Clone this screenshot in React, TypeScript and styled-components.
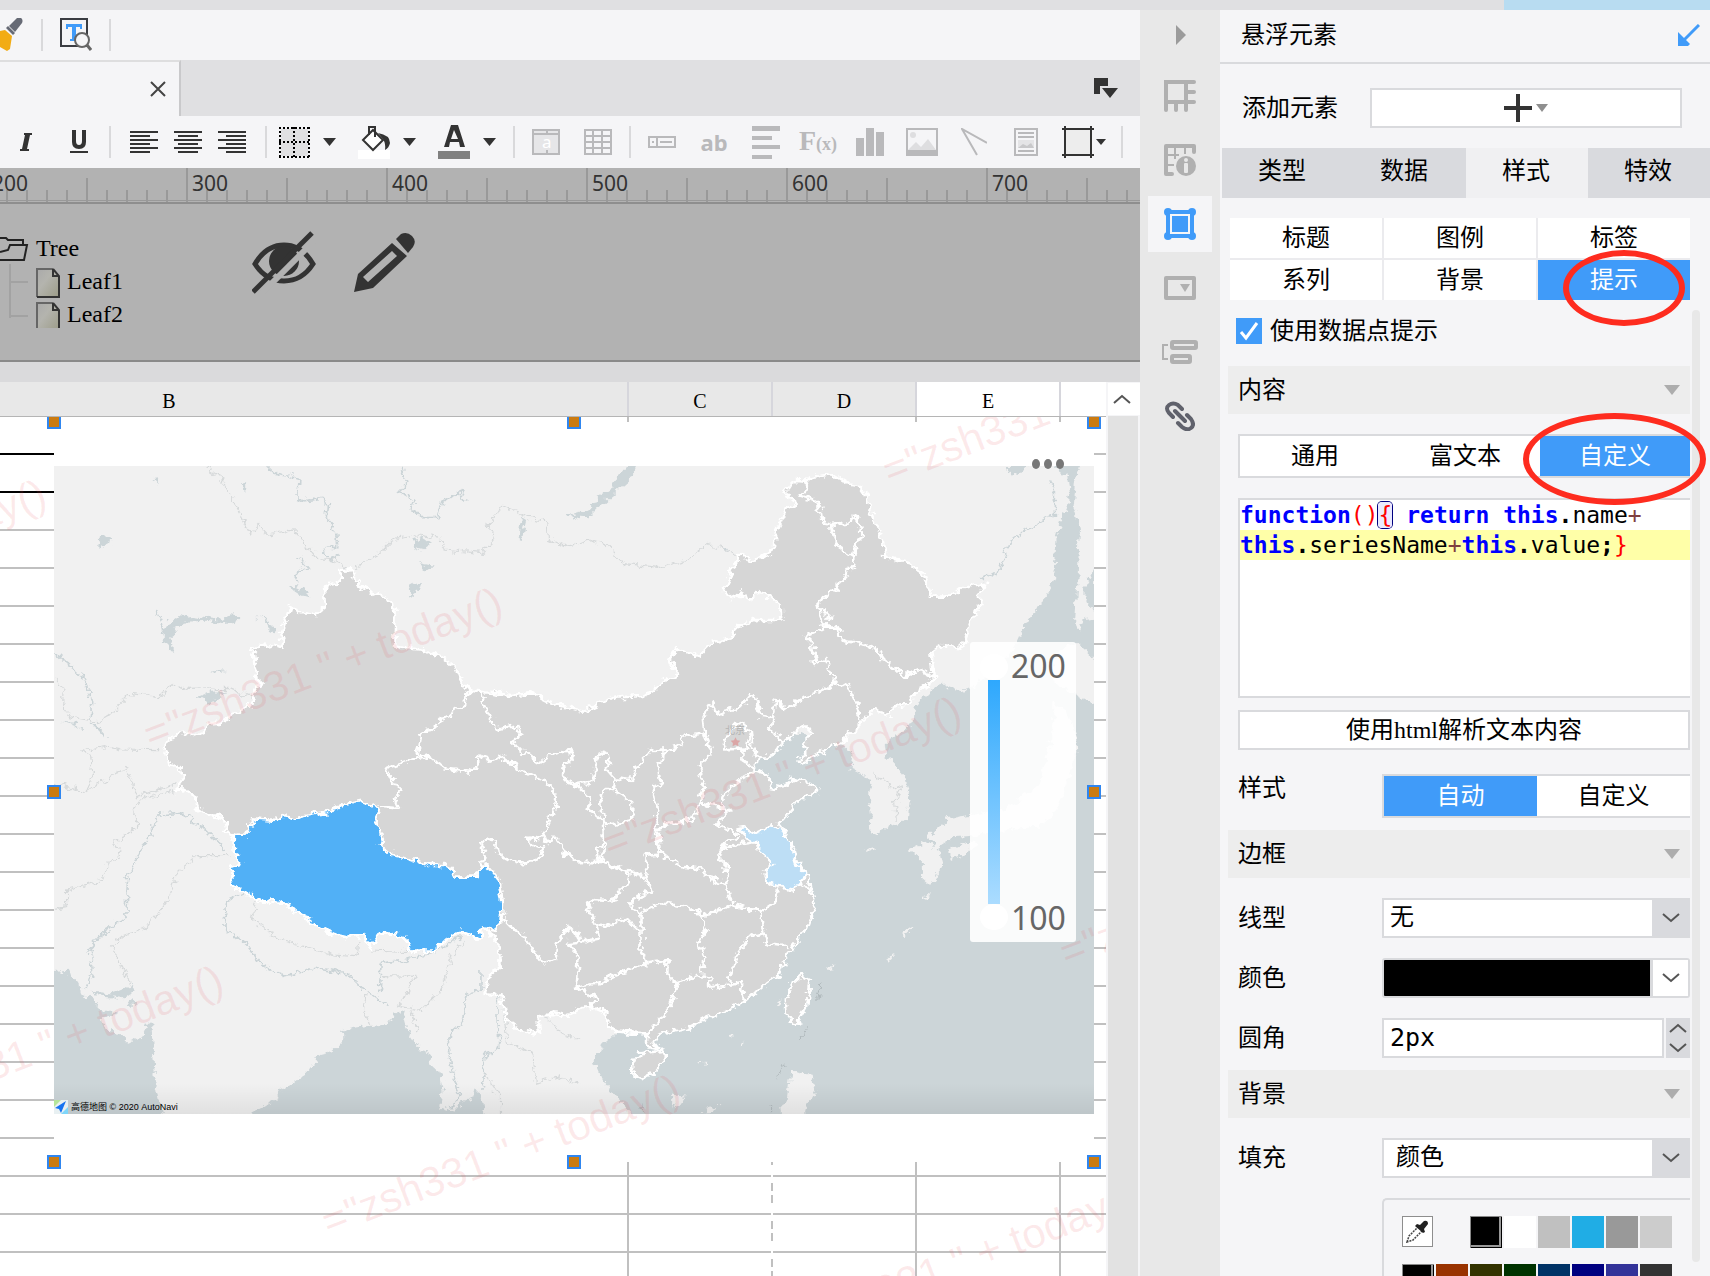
import React from "react";
import styled, { createGlobalStyle, css } from "styled-components";

const ui = `"Liberation Serif", "Noto Sans CJK SC", sans-serif`;
const mono = `"DejaVu Sans Mono", "Noto Sans CJK SC", monospace`;
const blue = "#409bf9";
const line = "#d9dadd";
const panelBg = "#f5f5f7";

const Global = createGlobalStyle`
  * { box-sizing: border-box; }
  body { margin: 0; background: ${panelBg}; font-family: ${ui}; font-size: 24px; line-height: 28px; color: #000; }
  button, input, select { font: inherit; color: inherit; margin: 0; padding: 0; border: 0; border-radius: 0; background: none; }
  svg { display: block; flex: none; }
`;

const Page = styled.div`
  height: 100vh;
  display: flex;
  flex-direction: column;
  overflow: hidden;
`;
const TopStrip = styled.div`
  flex: none;
  height: 10px;
  display: flex;
  justify-content: flex-end;
  background: #e0e0e2;
`;
const TopAccent = styled.div`
  width: 206px;
  background: #b8dcf1;
`;
const Workspace = styled.div`
  flex: 1;
  min-height: 0;
  display: flex;
`;
const Main = styled.main`
  flex: 1;
  min-width: 0;
  display: flex;
  flex-direction: column;
`;

/* ---------- toolbars ---------- */
const Bar = styled.div<{ $h: number; $pad?: number }>`
  flex: none;
  height: ${(p) => p.$h}px;
  padding-left: ${(p) => p.$pad ?? 0}px;
  display: flex;
  align-items: center;
  background: ${panelBg};
`;
const Sep = styled.span<{ $l: number; $r: number }>`
  flex: none;
  width: 2px;
  height: 32px;
  margin: 0 ${(p) => p.$r}px 0 ${(p) => p.$l}px;
  background: #d9d9db;
`;
const Tool = styled.button<{ $w: number; $gap?: number; $off?: boolean }>`
  flex: none;
  width: ${(p) => p.$w}px;
  height: 36px;
  margin-right: ${(p) => p.$gap ?? 0}px;
  display: flex;
  align-items: center;
  justify-content: center;
  color: ${(p) => (p.$off ? "#b9b9bb" : "#333")};
  white-space: nowrap;
`;
const SansGlyph = styled.span`
  font: bold 22px/28px "Noto Sans", sans-serif;
`;
const FxGlyph = styled.span`
  font: bold 28px/28px "Liberation Serif", serif;
  small { font-size: 18px; }
`;
const TabBar = styled.div`
  flex: none;
  height: 56px;
  display: flex;
  align-items: center;
  justify-content: space-between;
  background: #e0e0e2;
`;
const ActiveTab = styled.div`
  width: 181px;
  height: 56px;
  display: flex;
  align-items: center;
  justify-content: flex-end;
  padding-right: 13px;
  background: ${panelBg};
  border-top: 2px solid #dededf;
  border-right: 2px solid #c9c9cb;
`;

/* ---------- ruler and parameter pane ---------- */
const Ruler = styled.div`
  flex: none;
  height: 36px;
  overflow: hidden;
  background:
    linear-gradient(#8e8e8e, #8e8e8e) 0 34px / 100% 2px no-repeat,
    linear-gradient(#999, #999) 0 32px / 100% 1px no-repeat,
    repeating-linear-gradient(90deg, #999 0 2px, transparent 2px 200px) -14px 0 / calc(100% + 14px) 34px no-repeat,
    repeating-linear-gradient(90deg, #999 0 2px, transparent 2px 100px) -14px 10px / calc(100% + 14px) 24px no-repeat,
    repeating-linear-gradient(90deg, #999 0 2px, transparent 2px 20px) -14px 22px / calc(100% + 14px) 12px no-repeat,
    #b2b2b2;
`;
const RulerLabels = styled.div`
  display: flex;
  margin-left: -14px;
  font: 21px/30px "Noto Sans", sans-serif;
  color: #333;
  span { flex: none; width: 200px; padding-left: 6px; }
`;
const ParamPane = styled.div`
  flex: none;
  height: 158px;
  display: flex;
  align-items: flex-start;
  padding-top: 24px;
  background: #b2b2b2;
  border-bottom: 2px solid #8a8a8a;
`;
const TreeBox = styled.div`
  width: 252px;
  height: 100px;
  display: flex;
  gap: 7px;
  overflow: hidden;
`;
const TreeLabels = styled.ul`
  margin: 0 0 0 -31px;
  padding: 6px 0 0;
  list-style: none;
`;
const TreeLabel = styled.li<{ $deep?: boolean }>`
  height: 33px;
  padding-left: ${(p) => (p.$deep ? 31 : 0)}px;
`;
const PaneIcons = styled.div`
  display: flex;
  gap: 38px;
`;
const Gap = styled.div`
  flex: none;
  height: 20px;
  background: #dadadc;
`;

/* ---------- sheet ---------- */
const SheetWrap = styled.div`
  flex: 1;
  min-height: 0;
  display: flex;
`;
const SheetColumn = styled.div`
  flex: 1;
  min-width: 0;
  display: flex;
  flex-direction: column;
`;
const ColHeads = styled.div`
  flex: none;
  height: 35px;
  display: flex;
  border-bottom: 1px solid #b5b5b5;
  background: #fff;
`;
const ColHead = styled.div<{ $w?: number; $pad?: number; $on?: boolean }>`
  ${(p) => (p.$w ? css`flex: none; width: ${p.$w}px;` : css`flex: 1;`)}
  padding: 3px ${(p) => p.$pad ?? 0}px 0 0;
  display: flex;
  align-items: center;
  justify-content: center;
  font-size: 20px;
  background: ${(p) => (p.$on ? "#fff" : "#e8e8e8")};
  border-right: ${(p) => (p.$w ? "2px solid #d6d6dc" : "0")};
`;
const Sheet = styled.div`
  position: relative;
  flex: 1;
  overflow: hidden;
  background:
    linear-gradient(#000, #000) 0 36px / 54px 2px no-repeat,
    linear-gradient(#000, #000) 0 74px / 54px 2px no-repeat,
    repeating-linear-gradient(#fff 0 6px, #c0c0c0 6px 14px, #fff 14px 18px, #c0c0c0 18px 26px, #fff 26px 38px) 771px 0 / 2px 100% no-repeat,
    linear-gradient(#c0c0c0, #c0c0c0) 627px 0 / 2px 100% no-repeat,
    linear-gradient(#c0c0c0, #c0c0c0) 915px 0 / 2px 100% no-repeat,
    linear-gradient(#c0c0c0, #c0c0c0) 1059px 0 / 2px 100% no-repeat,
    repeating-linear-gradient(#fff 0 36px, #c0c0c0 36px 38px);
`;
const FloatBox = styled.section`
  position: absolute;
  left: 54px;
  top: 5px;
  width: 1040px;
  height: 740px;
  padding: 44px 0 48px;
  background: #fff;
`;
const HandleLayer = styled.div`
  position: absolute;
  left: 54px;
  top: 5px;
  width: 1040px;
  height: 740px;
  pointer-events: none;
`;
const Handle = styled.i<{ $x: number; $y: number }>`
  position: absolute;
  left: calc(${(p) => p.$x}% - 7px);
  top: calc(${(p) => p.$y}% - 7px);
  width: 14px;
  height: 14px;
  background: #cb7b10;
  border: 2px solid #2f86f0;
`;
const MapFrame = styled.div`
  position: relative;
  height: 648px;
`;
const CityLabel = styled.span`
  position: absolute;
  left: 671px;
  top: 257px;
  font: 10px/14px "Noto Sans CJK SC", sans-serif;
  color: #b4b4b4;
`;
const MoreButton = styled.button`
  position: absolute;
  right: 30px;
  top: -7px;
  display: flex;
  gap: 4px;
  i { width: 8px; height: 10px; border-radius: 50%; background: #777; }
`;
const Legend = styled.div`
  position: absolute;
  right: 18px;
  top: 176px;
  width: 106px;
  height: 300px;
  padding: 12px 10px;
  display: flex;
  gap: 3px;
  background: rgba(255, 255, 255, 0.9);
  border-radius: 3px;
`;
const LegendTrack = styled.div`
  width: 28px;
  display: flex;
  flex-direction: column;
  align-items: center;
  i { width: 28px; height: 26px; border-radius: 50%; background: #fff; }
  b { flex: 1; width: 12px; background: linear-gradient(#2ea8fd, #abdcff); }
`;
const LegendLabels = styled.div`
  display: flex;
  flex-direction: column;
  justify-content: space-between;
  font: 32px/24px "Noto Sans", sans-serif;
  color: #666;
`;
const MapCredit = styled.div`
  position: absolute;
  left: 0;
  bottom: 0;
  display: flex;
  align-items: center;
  gap: 3px;
  font: 9px/14px "Liberation Sans", "Noto Sans CJK SC", sans-serif;
`;
const Watermark = styled.span<{ $x: number; $y: number }>`
  position: absolute;
  left: ${(p) => p.$x}px;
  top: ${(p) => p.$y}px;
  font: 42px/42px "Liberation Sans", Arial, sans-serif;
  color: rgba(232, 80, 90, 0.12);
  white-space: pre;
  transform: rotate(-21deg);
  transform-origin: 0 100%;
  pointer-events: none;
`;
const VScroll = styled.div`
  flex: none;
  width: 34px;
  display: flex;
  flex-direction: column;
  background: ${panelBg};
  padding: 0 2px;
`;
const VScrollUp = styled.button`
  height: 32px;
  margin: 1px -2px 1px 0;
  padding-right: 4px;
  display: flex;
  align-items: center;
  justify-content: center;
  background: #fff;
`;
const VScrollThumb = styled.div`
  flex: 1;
  background: #e2e2e2;
`;

/* ---------- rail ---------- */
const Rail = styled.nav`
  flex: none;
  width: 80px;
  padding: 0 8px;
  display: flex;
  flex-direction: column;
  gap: 8px;
  background: #e8e8e8;
`;
const RailButton = styled.button<{ $on?: boolean }>`
  height: 56px;
  display: flex;
  align-items: center;
  justify-content: center;
  background: ${(p) => (p.$on ? panelBg : "none")};
  color: #b0b0b0;
`;
const RailToggle = styled(RailButton)`
  height: 50px;
  padding-left: 2px;
`;

/* ---------- property panel ---------- */
const Panel = styled.aside`
  flex: none;
  width: 490px;
  display: flex;
  flex-direction: column;
  background: ${panelBg};
`;
const PanelHead = styled.header`
  flex: none;
  height: 54px;
  padding: 0 10px 2px 21px;
  display: flex;
  align-items: center;
  justify-content: space-between;
  border-bottom: 2px solid ${line};
  h2 { margin: 0; font-size: 24px; font-weight: normal; }
`;
const AddRow = styled.div`
  flex: none;
  height: 84px;
  padding: 4px 28px 0 22px;
  display: grid;
  grid-template-columns: 128px 1fr;
  align-items: center;
`;
const AddButton = styled.button`
  height: 40px;
  display: flex;
  align-items: center;
  justify-content: center;
  gap: 4px;
  background: #fff;
  border: 2px solid ${line};
`;
const Tabs = styled.div`
  flex: none;
  height: 50px;
  margin-left: 2px;
  display: grid;
  grid-template-columns: repeat(4, 1fr);
`;
const Tab = styled.button<{ $on?: boolean }>`
  background: ${(p) => (p.$on ? "#f0f0f2" : "#d9dade")};
  padding: 0 2px 4px 0;
`;
const SubTabs = styled.div`
  flex: none;
  margin: 20px 20px 0 10px;
  display: grid;
  grid-template-columns: repeat(3, 1fr);
  gap: 2px;
  background: #ebebee;
`;
const SubTab = styled.button<{ $on?: boolean }>`
  position: relative;
  height: 40px;
  background: ${(p) => (p.$on ? blue : "#fff")};
  color: ${(p) => (p.$on ? "#fff" : "#000")};
`;
const RedRing = styled.i<{ $x: number; $y: number; $w: number; $h: number }>`
  position: absolute;
  z-index: 2;
  left: ${(p) => p.$x}px;
  top: ${(p) => p.$y}px;
  width: ${(p) => p.$w}px;
  height: ${(p) => p.$h}px;
  border: 6px solid #fe2c1f;
  border-radius: 50%;
`;
const PanelBody = styled.div`
  flex: 1;
  min-height: 0;
  display: flex;
  gap: 2px;
  padding-right: 10px;
`;
const PanelScroll = styled.div`
  flex: 1;
  min-width: 0;
  padding-left: 8px;
`;
const ScrollThumb = styled.div`
  width: 8px;
  margin: 10px 0 14px;
  border-radius: 4px;
  background: #e8e8e8;
`;
const CheckRow = styled.label`
  height: 66px;
  padding: 0 8px 4px;
  display: flex;
  align-items: center;
  gap: 8px;
`;
const CheckBox = styled.input`
  appearance: none;
  width: 26px;
  height: 26px;
  background: ${blue} center / 26px no-repeat
    url("data:image/svg+xml,%3Csvg xmlns='http://www.w3.org/2000/svg' viewBox='0 0 26 26'%3E%3Cpath d='M5 14l5 6L21 5' fill='none' stroke='white' stroke-width='3'/%3E%3C/svg%3E");
`;
const SectionHead = styled.button`
  width: 100%;
  height: 48px;
  padding: 0 10px;
  display: flex;
  align-items: center;
  justify-content: space-between;
  background: #ededed;
`;
const Fields = styled.div`
  padding: 20px 0 12px 10px;
  display: flex;
  flex-direction: column;
  gap: 20px;
`;
const ContentFields = styled.div`
  padding: 20px 0 12px 10px;
  display: flex;
  flex-direction: column;
`;
const Segments = styled.div`
  height: 44px;
  display: flex;
  border: 2px solid ${line};
  border-right: 0;
  background: #fff;
`;
const Segment = styled.button<{ $on?: boolean }>`
  position: relative;
  flex: 1;
  background: ${(p) => (p.$on ? blue : "#fff")};
  color: ${(p) => (p.$on ? "#fff" : "#000")};
`;
const Code = styled.div`
  height: 200px;
  margin: 20px 0 12px;
  border: 2px solid ${line};
  border-right: 0;
  background: #fff;
  font: 23px/30px ${mono};
  white-space: pre;
  outline: none;
`;
const CodeLine = styled.div<{ $on?: boolean }>`
  height: 30px;
  background: ${(p) => (p.$on ? "#ffffa8" : "none")};
`;
const Kw = styled.b`
  color: #0000ff;
`;
const Br = styled.span<{ $match?: boolean }>`
  color: #ff0000;
  ${(p) =>
    p.$match &&
    css`
      border-radius: 4px;
      background: #eaeaff;
      box-shadow: 0 0 0 1px #000080;
    `}
`;
const Op = styled.span`
  color: #804040;
`;
const WideButton = styled.button`
  height: 40px;
  margin-bottom: 24px;
  background: #fff;
  border: 2px solid ${line};
`;
const Field = styled.div<{ $top?: boolean }>`
  display: grid;
  grid-template-columns: 144px 1fr;
  align-items: ${(p) => (p.$top ? "start" : "center")};
`;
const SelectFrame = styled.div`
  height: 40px;
  display: grid;
  grid-template-columns: 1fr 38px;
  background: #fff;
  border: 2px solid ${line};
  border-right: 0;
`;
const Select = styled.select<{ $pad: number }>`
  grid-area: 1 / 1 / 2 / 3;
  appearance: none;
  width: 100%;
  height: 36px;
  padding: 0 44px 2px ${(p) => p.$pad}px;
  outline: none;
`;
const SelectArrow = styled.span<{ $plain?: boolean }>`
  grid-area: 1 / 2 / 2 / 3;
  display: flex;
  align-items: center;
  justify-content: center;
  background: ${(p) => (p.$plain ? "#fff" : "#d9dade")};
  border-left: ${(p) => (p.$plain ? `3px solid ${line}` : "0")};
  pointer-events: none;
`;
const ColorButton = styled.button`
  width: 100%;
  height: 40px;
  display: grid;
  grid-template-columns: 1fr 38px;
  background: #000;
  border: 2px solid ${line};
  border-radius: 3px;
`;
const Stepper = styled.div`
  height: 40px;
  display: grid;
  grid-template-columns: 1fr 24px;
  gap: 2px;
`;
const StepInput = styled.input`
  width: 100%;
  min-width: 0;
  padding: 0 6px;
  background: #fff;
  border: 2px solid ${line};
  font: 25px/36px ${mono};
`;
const StepButtons = styled.div`
  display: flex;
  flex-direction: column;
  background: #d9dade;
  button { flex: 1; display: flex; align-items: center; justify-content: center; }
`;
const Palette = styled.div`
  margin-left: 144px;
  height: 120px;
  padding: 16px 18px;
  display: flex;
  flex-direction: column;
  gap: 16px;
  border: 2px solid ${line};
  border-right: 0;
  border-radius: 5px 0 0 0;
`;
const SwatchRow = styled.div`
  height: 32px;
  display: flex;
  gap: 2px;
`;
const PickButton = styled.button`
  width: 31px;
  height: 31px;
  margin-right: 35px;
  display: flex;
  align-items: center;
  justify-content: center;
  background: #fff;
  border: 1px solid #8e8e8e;
`;
const Swatch = styled.button<{ $c: string; $on?: boolean }>`
  width: 32px;
  height: 32px;
  background: ${(p) => p.$c};
  ${(p) => p.$on && css`box-shadow: inset 1px 1px #888, inset -1px -1px #000, inset -3px -3px #999;`}
`;

/* ---------- small drawings ---------- */
const Caret = ({ w = 13, h = 8, c = "#333" }: { w?: number; h?: number; c?: string }) => (
  <svg width={w} height={h} viewBox="0 0 13 8" preserveAspectRatio="none"><path d="M0 0h13L6.5 8z" fill={c} /></svg>
);
const Chevron = ({ up }: { up?: boolean }) => (
  <svg width="18" height="10" viewBox="0 0 18 10">
    <path d={up ? "M1 9l8-7 8 7" : "M1 1l8 7 8-7"} fill="none" stroke="#555" strokeWidth="2" />
  </svg>
);
const Lines = ({ rows }: { rows: number[][] }) => (
  <svg width="28" height="24" viewBox="0 0 28 24" fill="currentColor">
    {rows.map(([x, w], i) => <rect key={i} x={x} y={1 + i * 4} width={w} height="2" />)}
  </svg>
);
const Leaf = ({ y }: { y: number }) => (
  <g transform={`translate(36 ${y})`}>
    <path d="M1 1h16l6 7v21H1z" fill="url(#leafFill)" />
    <path d="M1 29V1h16" fill="none" stroke="#666" strokeWidth="2" />
    <path d="M17 1v7h6M17 1l6 7v21H1" fill="none" stroke="#333" strokeWidth="2" />
  </g>
);

const lakes = [
  "M440 640 455 610 485 585 500 592 520 588 600 600 625 585 645 592 640 605 600 610 560 602 500 605 475 620 462 660 468 692 458 690 440 660z",
  "M695 592 730 600 748 640 735 638 722 608z",
  "M535 830 570 815 608 814 590 840 560 845z",
  "M568 750 608 752 590 760z",
  "M1115 360 1140 350 1165 372 1140 392 1118 382z",
  "M1408 290 1422 300 1410 358 1402 355z",
  "M1105 520 1115 495 1135 492 1130 512 1110 527z",
  "M265 370 275 352 300 348 295 370 275 380z",
  "M782 500 800 498 830 515 838 532 815 525z",
  "M1135 432 1170 440 1155 452z",
  "M652 190 665 190 666 218 655 210z",
  "M415 178 435 175 428 195z",
  "M168 905 200 908 225 930 200 918z",
  "M1694 138 1719 138 1704 175 1664 215 1619 260 1589 295 1534 290 1564 282 1594 265 1614 235 1654 205 1674 165z",
  "M1950 385 1970 380 1968 395z",
  "M1530 287 1568 275 1568 300z",
];
const rivers = [
  "M720 140 740 160 780 165 808 175 805 235 820 243 870 235 885 250 882 290 910 340 913 380 885 378 870 400 900 420 915 405",
  "M1085 140 1100 190 1080 215 1120 240 1110 265 1130 290 1185 290 1200 240 1245 218 1260 245",
  "M810 410 832 440 805 455 800 490",
  "M146 695 180 730 215 760 240 810 248 850 243 900 285 950",
  "M420 570 435 600 440 640",
  "M400 1260 375 1300 345 1370 340 1490 270 1550 240 1590 252 1645 230 1710",
  "M400 1255 430 1185 490 1180 545 1220 610 1290",
  "M660 1420 610 1445 605 1520 660 1570 710 1635 770 1668 850 1645 940 1662 975 1700 1050 1760",
  "M1245 1550 1190 1590 1100 1620 1030 1630 1025 1720",
  "M1300 1650 1300 1710 1260 1720 1250 1810 1210 1850 1222 1950 1240 2020 1220 2065",
  "M1345 1720 1348 1885 1310 1905 1310 1960 1305 2010",
  "M2655 480 2700 450 2730 360 2820 300 2850 285 2850 190 2835 180",
];
const borders = [
  "M555 140 600 180 640 260 675 340 700 310 720 342 790 330 830 375 860 415 900 420 940 445",
  "M960 440 1020 405 1060 360 1130 345 1190 355 1200 390 1300 400 1335 365 1320 320 1355 255 1420 290 1475 305 1480 355 1525 380 1600 362 1640 375 1685 430 1780 442 1860 420 1915 373 2000 405",
  "M146 775 170 805 170 858 190 890 260 905 300 880 350 820 435 830 465 790 510 808 620 805 685 835",
  "M285 980 330 990 430 992 M285 980 225 990 245 1010 250 1060 235 1115 340 1040 370 1130 480 1090",
  "M235 1115 146 1090 M475 1110 380 1140 360 1170 370 1220 310 1270 325 1310 290 1330 280 1380 180 1410 180 1460 146 1468",
  "M620 1310 530 1310 480 1360 455 1440 400 1520 330 1548 300 1580 355 1700",
  "M695 1440 680 1500 760 1560 900 1605 965 1610 970 1560 M1000 1590 1110 1595",
  "M1120 1560 1245 1550 M1035 1670 1120 1672 1080 1760 1140 1770 1190 1715 1220 1610 1250 1560",
  "M990 1710 985 1770 1000 1815 M1110 1770 1130 1840",
  "M1355 1720 1370 1860 1400 1880 1440 1900 1450 1990 1510 1970 1568 1990",
  "M1480 1795 1520 1840 1568 1860 M1310 1960 1350 2030 1350 2082",
  "M2360 1060 2420 1110 2440 1100 2420 1140 2425 1200",
];
const china =
  "M445 1000 455 960 485 940 510 935 525 948 550 940 560 910 600 908 640 880 685 850 690 815 700 795 690 740 687 700 672 690 740 672 767 683 760 640 783 562 810 575 855 582 878 560 876 500 918 485 920 450 955 447 962 485 1000 515 1045 530 1070 580 1065 680 1130 688 1190 705 1230 740 1245 780 1270 812 1380 825 1440 820 1480 845 1540 865 1574 875 1630 845 1670 832 1740 828 1775 805 1790 785 1830 765 1812 720 1825 685 1890 707 1925 668 1975 655 1990 620 2040 600 2115 600 2112 560 2070 520 2045 515 2025 537 2005 520 1975 535 1957 510 2000 405 2040 425 2095 385 2095 340 2125 270 2148 260 2145 235 2120 220 2150 180 2175 182 2190 172 2250 163 2290 190 2320 195 2345 235 2360 300 2390 370 2393 410 2460 430 2500 465 2518 530 2570 530 2600 505 2665 488 2648 515 2650 550 2625 600 2600 685 2545 675 2517 695 2525 780 2475 820 2450 855 2410 860 2410 885 2360 870 2325 915 2275 965 2214 1000 2169 1030 2164 1020 2182 990 2169 970 2194 940 2189 920 2164 920 2144 940 2139 955 2114 965 2084 1010 2049 1010 2039 1050 2079 1065 2084 1100 2109 1105 2149 1075 2204 1095 2214 1110 2174 1130 2144 1160 2104 1215 2124 1245 2144 1290 2154 1330 2189 1370 2194 1420 2204 1450 2179 1530 2139 1580 2109 1660 2059 1700 2014 1745 1954 1775 1909 1795 1859 1825 1784 1840 1769 1870 1779 1885 1749 1885 1749 1840 1669 1835 1639 1810 1639 1780 1589 1755 1539 1785 1500 1780 1455 1790 1460 1840 1405 1830 1368 1800 1355 1720 1310 1725 1320 1670 1350 1640 1350 1570 1330 1545 1308 1525 1295 1555 1245 1532 1205 1560 1170 1595 1113 1595 1095 1550 1030 1535 1000 1580 990 1545 940 1553 890 1540 860 1520 820 1490 790 1465 735 1435 718 1447 660 1415 635 1400 625 1340 650 1335 632 1290 632 1245 612 1235 605 1190 560 1185 535 1165 530 1130 495 1108 475 1110 495 1090 488 1045 455 1032z";
const tibet =
  "M632 1245 665 1243 685 1195 750 1200 770 1185 790 1198 860 1180 895 1175 905 1160 975 1145 1015 1160 1025 1175 1015 1200 1028 1225 1035 1260 1030 1280 1060 1305 1110 1315 1160 1335 1210 1335 1235 1370 1285 1370 1300 1340 1320 1340 1350 1380 1360 1450 1355 1500 1340 1530 1308 1525 1295 1555 1245 1532 1205 1560 1170 1595 1113 1595 1095 1550 1030 1535 1000 1580 990 1545 940 1553 890 1540 860 1520 820 1490 790 1465 735 1435 718 1447 660 1415 635 1400 625 1340 650 1335 632 1290z";
const westProvinces = [
  "M1270 812 1255 825 1258 855 1225 880 1190 900 1170 930 1140 935 1130 1000 1122 1015 1045 1045 1060 1080 1082 1110 1065 1130 1078 1165 1025 1160",
  "M1122 1015 1160 1008 1200 1045 1270 1055 1290 1040 1290 1005 1330 1022 1355 1010 1400 1045 1440 1065 1490 1100 1505 1155 1485 1200 1470 1240 1480 1270 1500 1250 1530 1290 1568 1330",
  "M1300 815 1318 880 1340 930 1400 915 1405 940 1385 970 1430 1010 1460 1030 1490 1005 1540 990 1548 1020 1520 1045 1525 1075 1560 1100",
  "M1425 1250 1470 1255 M1425 1250 1440 1275 1470 1290 1450 1320 1420 1335 1375 1318 1345 1300 1340 1262 1315 1255 1300 1275 1310 1290 1302 1340",
  "M1355 1490 1380 1520 1410 1540 1465 1630 1500 1620 1510 1560 1545 1520 1570 1560",
];
const northProvinces = [
  "M5 990 30 995 30 1020 8 1050 15 1080 45 1095 90 1085 92 1040 105 1005 125 995 130 1050 150 1075 190 1080 215 1030 245 990 290 988",
  "M45 1095 80 1130 75 1165 115 1200 120 1290 110 1325",
  "M150 1075 145 1110 195 1150 195 1200 130 1215 115 1200 110 1130 120 1110 145 1110",
  "M290 988 265 1040 270 1085 255 1110 265 1170 255 1230 270 1300",
  "M290 988 320 980 330 950 390 940 410 1000 375 1040 390 1090 375 1160 360 1200 310 1205 258 1232",
  "M390 940 385 890 410 850 425 880 490 860 515 825 530 835 545 890 575 895 585 840 610 870 660 830 735 800 745 785 780 800 800 850 815 915",
  "M575 895 565 920 600 965",
  "M450 945 480 910 515 930 505 985 450 988 440 970z",
  "M515 930 520 990 535 1010M490 988 490 1020 525 1045",
  "M525 1055 490 1075 450 1110 435 1160 460 1170 420 1215 480 1240M375 1150 435 1160",
  "M745 785 735 770 720 720 690 735 680 670 660 650 690 635 715 620 750 620 760 660 850 680 870 720 900 740 930 770 970 750 1015 778",
  "M715 620 700 580 695 550 765 485 780 445 795 440 795 410 750 380 740 350 732 315 710 310 700 250 680 240 650 230 668 200 660 180",
  "M732 315 780 310 795 290 820 325 800 370 795 410",
  "M700 570 735 590 720 600",
  "M440 1295 455 1260 480 1250",
];
const southProvinces = [
  "M0 40 35 45 45 70 110 65 185 95 180 130 140 185 90 180 75 210 95 250 130 260 180 235 215 275",
  "M185 90 230 115 250 155 195 175 190 205 220 215",
  "M230 115 240 70 225 45 275 40 320 80 380 85 400 115 450 130 465 195 440 210 380 225 345 200 270 190 220 215 220 330 235 370",
  "M380 225 395 260 375 305 390 350 385 400",
  "M0 300 20 260 45 270 55 305 105 295 95 250M20 310 50 350 45 440 105 430 150 405 235 370M20 310 55 305",
  "M45 440 105 480 75 500M235 370 290 360 290 400 315 430 300 500 260 550 235 580",
  "M315 430 370 405 415 410 400 440 490 430 500 485",
  "M465 195 540 215 550 280 510 290 480 340 455 430",
  "M455 130 450 80 425 55 440 20 530 5",
  "M540 215 580 185 590 145M550 280 560 310 615 315M650 125 680 160",
  "M270 40 265 -25M110 65 95 40 120 0",
];
const ns = { vectorEffect: "non-scaling-stroke" as const };

function ChinaMap() {
  return (
    <svg width="100%" height="100%" viewBox="146 138 2811 1944" preserveAspectRatio="none" role="img" aria-label="map">
      <defs>
        <filter id="coast" x="0" y="0" width="100%" height="100%">
          <feTurbulence type="fractalNoise" baseFrequency="0.05" numOctaves="3" seed="4" />
          <feDisplacementMap in="SourceGraphic" scale="30" xChannelSelector="R" yChannelSelector="G" />
        </filter>
        <linearGradient id="fade" x1="0" x2="0" y1="0" y2="1">
          <stop offset="0" stopColor="#000" stopOpacity="0" />
          <stop offset="1" stopColor="#000" stopOpacity="0.07" />
        </linearGradient>
      </defs>
      <rect x="146" y="138" width="2811" height="1944" fill="#f1f1f1" />
      <g filter="url(#coast)">
        <rect x="100" y="90" width="2950" height="2080" fill="#f1f1f1" />
        <g fill="#ccd5d8">
          <path d="M100 1660 185 1652 190 1668 215 1685 218 1720 250 1735 262 1760 275 1775 325 1775 300 1787 275 1792 280 1815 305 1840 345 1862 385 1850 400 1810 410 1820 412 1870 418 1960 430 2040 448 2120 100 2120z" />
          <path d="M250 1715 300 1720 345 1700 360 1695 358 1715 330 1738 300 1732 265 1730zM342 1757 357 1730 372 1757z" />
          <path d="M670 2120 683 2080 710 2065 750 2035 760 2010 820 1970 865 1905 900 1895 925 1865 925 1832 965 1822 1030 1815 1060 1800 1070 1775 1090 1780 1103 1835 1130 1880 1165 1905 1170 1940 1190 1960 1198 2000 1190 2060 1225 2072 1250 2045 1280 2030 1285 2005 1300 2030 1315 2120z" />
          <path
            transform="translate(1514 0)"
            d="M1330 90 1340 145 1370 170 1378 215 1370 260 1355 300 1342 350 1335 480 1300 550 1260 610 1240 660 1190 740 1115 800 1080 815 1050 805 1030 785 1005 810 960 860 955 910 900 950 875 980 880 1010 905 1030 935 1080 945 1130 940 1200 900 1215 835 1245 840 1180 835 1140 845 1090 830 1070 785 1050 790 1000 760 970 600 930 500 1010 520 1300 500 1600 300 1800 235 1840 155 1835 120 1870 92 1920 115 1980 150 2030 195 2082 220 2140 1520 2140 1520 90z"
          />
          <path d="M2720 138 2780 138 2750 165 2730 160z" />
          {lakes.map((d) => <path key={d} d={d} />)}
        </g>
        <g fill="#f1f1f1" transform="translate(1514 0)">
          <path d="M1415 90 1395 180 1388 260 1405 330 1400 440 1395 550 1392 600 1400 635 1415 600 1520 590 1520 90z" />
          <path d="M1395 665 1443 715 1520 770 1520 880 1443 852 1395 825 1330 780 1340 700z" />
          <path d="M1330 850 1375 880 1395 950 1398 1000 1370 1080 1340 1180 1290 1220 1180 1230 1115 1250 1060 1255 1010 1290 1000 1245 1050 1195 1110 1185 1200 1170 1290 1100 1330 960z" />
          <path d="M945 1290 990 1265 1030 1300 1035 1340 1000 1395 975 1370 975 1320z" />
          <path d="M1055 1290 1110 1260 1130 1275 1080 1310 1055 1318z" />
          <path d="M625 1955 680 1965 690 2010 665 2060 655 2140 605 2140 597 2050 615 2040z" />
          <path d="M825 1292 850 1285 850 1292 830 1298zM925 1540 950 1522 955 1526 930 1548zM882 1620 900 1600 905 1602 885 1628zM725 1642 738 1635 738 1648 728 1650zM980 1435 1000 1415 990 1440zM585 1750 600 1735 595 1755z" />
          <path d="M300 2020 320 2030 345 2035 330 2050 300 2060zM385 2080 400 2060 425 2058 410 2080zM455 1848 465 1845 465 1855 457 1856zM485 1868 495 1865 495 1880zM372 1930 390 1928 388 1934z" />
        </g>
        <path d="M2960 440 2934 490 2934 540 2960 580z" fill="#ccd5d8" />
        <g fill="none" stroke="#cbd4d7" strokeWidth="1.6">
          {rivers.map((d) => <path key={d} d={d} {...ns} />)}
        </g>
        <g fill="none" stroke="#d6d9da" strokeWidth="1.2">
          {borders.map((d) => <path key={d} d={d} {...ns} />)}
        </g>
        <g stroke="#fff" strokeWidth="2.6" strokeLinejoin="round">
          <path d={china} fill="#d6d6d6" {...ns} />
          <g fill="none">
            {westProvinces.map((d) => <path key={d} d={d} {...ns} />)}
            <g transform="translate(1514 0)">
              {northProvinces.map((d) => <path key={d} d={d} {...ns} />)}
            </g>
            <g transform="translate(1514 1260)">
              {southProvinces.map((d) => <path key={d} d={d} {...ns} />)}
            </g>
          </g>
          <path d={tibet} fill="#51b0f6" {...ns} />
          <g transform="translate(1514 1260)" fill="#d6d6d6">
            <path d="M655 405 675 415 665 500 635 555 612 520 610 480 630 430z" {...ns} />
            <path d="M215 640 280 632 280 660 250 700 225 715 195 700 195 665z" {...ns} />
            <path fill="#bddef5" d="M480-35 495-38 530-20 570-42 612-15 628 30 640 70 670 100 650 125 630 150 560 130 550 95 575 70 560 55 535 30 530 10 510 0 490-20z" {...ns} />
          </g>
        </g>
        <g fill="none" stroke="#b0b9bc" strokeWidth="1">
          <path d="M2219 1692 2210 1742M2186 1822 2160 1858M2119 1936 2100 1978M2083 2060V2082M1730 2052 1750 2080" {...ns} />
        </g>
      </g>
      <path d="M1988 952l4 9 9 1-6 7 1 10-8-5-8 5 1-10-6-7 9-1z" fill="#dba6a6" />
      <rect x="146" y="1990" width="2811" height="92" fill="url(#fade)" />
    </svg>
  );
}

const marks = [
  [-303, 189], [892, 33], [153, 297], [612, 406], [-126, 675], [1069, 515], [331, 784], [786, 892],
];
const handles = [[0, 0], [50, 0], [100, 0], [0, 50], [100, 50], [0, 100], [50, 100], [100, 100]];
const swatches = ["#000000", "#ffffff", "#c0c0c0", "#20ade5", "#999999", "#cccccc"];
const swatches2 = ["#000000", "#993300", "#333300", "#003300", "#003366", "#000080", "#333399", "#333333"];

export default function App() {
  return (
    <Page>
      <Global />
      <TopStrip><TopAccent /></TopStrip>
      <Workspace>
        <Main>
          <Bar $h={50}>
            <Tool $w={24} aria-label="format painter">
              <svg width="24" height="34" viewBox="0 0 24 34">
                <path d="M0 13l5-1 7 6-2 13-3 2-7-4z" fill="#f2ac14" />
                <path d="M6 10l2-2 7 7-2 2z" fill="#666a75" />
                <path d="M9 8l8-8q4-1 5 1 1 2 0 4l-7 9z" fill="#666a75" />
              </svg>
            </Tool>
            <Sep $l={17} $r={17} />
            <Tool $w={32} $gap={17} aria-label="preview">
              <svg width="32" height="36" viewBox="0 0 32 36">
                <rect x="1" y="2" width="26" height="27" fill="none" stroke="#3b3d42" strokeWidth="2" />
                <path d="M6 7h16v5h-2v-2h-4v12h2v2h-8v-2h2V10H8v2H6z" fill={blue} />
                <circle cx="22" cy="23" r="7" fill={panelBg} stroke="#666" strokeWidth="2" />
                <path d="M27 28l4 5" stroke="#666" strokeWidth="3" />
              </svg>
            </Tool>
            <Sep $l={0} $r={0} />
          </Bar>
          <TabBar>
            <ActiveTab>
              <Tool $w={16} aria-label="close">
                <svg width="16" height="16" viewBox="0 0 16 16"><path d="M1 1l14 14M15 1L1 15" stroke="#444" strokeWidth="2" /></svg>
              </Tool>
            </ActiveTab>
            <Tool $w={24} $gap={22} aria-label="tab list">
              <svg width="24" height="20" viewBox="0 0 24 20" fill="#333"><path d="M0 0h14v8H6v8H0zM8 10h16l-8 10z" /></svg>
            </Tool>
          </TabBar>
          <Bar $h={52} $pad={18}>
            <Tool $w={16} $gap={35} aria-label="italic">
              <svg width="12" height="18" viewBox="0 0 12 18" fill="#333"><path d="M4 0h8v2h-2L7 16h2v2H0v-2h2L5 2H4z" /></svg>
            </Tool>
            <Tool $w={20} aria-label="underline">
              <svg width="18" height="24" viewBox="0 0 18 24" fill="#333"><path d="M2 0h4v11q0 4 3 4t3-4V0h4v12q0 7-7 7t-7-7zM0 21h18v2H0z" /></svg>
            </Tool>
            <Sep $l={20} $r={19} />
            <Tool $w={28} $gap={16} aria-label="align left"><Lines rows={[[0, 28], [0, 20], [0, 28], [0, 20], [0, 28], [0, 20]]} /></Tool>
            <Tool $w={28} $gap={16} aria-label="align center"><Lines rows={[[0, 28], [4, 20], [0, 28], [4, 20], [0, 28], [4, 20]]} /></Tool>
            <Tool $w={28} aria-label="align right"><Lines rows={[[0, 28], [8, 20], [0, 28], [8, 20], [0, 28], [8, 20]]} /></Tool>
            <Sep $l={19} $r={12} />
            <Tool $w={31} $gap={13} aria-label="borders">
              <svg width="31" height="31" viewBox="0 0 31 31">
                <path d="M2 2h27v27H2z" fill="#e0e0e2" />
                <path d="M0 1h31M0 30h31M0 15h31M1 0v31M30 0v31M15 0v31" stroke="#000" strokeWidth="2" strokeDasharray="2 2" />
              </svg>
            </Tool>
            <Tool $w={13} $gap={22} aria-label="border options"><Caret /></Tool>
            <Tool $w={32} $gap={13} aria-label="fill color">
              <svg width="32" height="34" viewBox="0 0 32 34">
                <rect y="25" width="32" height="9" fill="#fff" />
                <path d="M5 15L15 5l10 10-10 10z" fill="#fff" stroke="#333" strokeWidth="2" />
                <path d="M11 10V2h6v10" fill="none" stroke="#333" strokeWidth="2" />
                <path d="M20 8q12 2 12 10-1 5-5 7 1-6-2-11z" fill="#333" />
              </svg>
            </Tool>
            <Tool $w={13} $gap={22} aria-label="fill options"><Caret /></Tool>
            <Tool $w={32} $gap={13} aria-label="font color">
              <svg width="32" height="34" viewBox="0 0 32 34">
                <path fillRule="evenodd" d="M13 0h7l7 22h-5l-1-5h-9l-1 5H6zM16 5l-3 9h7z" fill="#333" />
                <rect y="26" width="32" height="8" fill="#808080" />
              </svg>
            </Tool>
            <Tool $w={13} aria-label="font color options"><Caret /></Tool>
            <Sep $l={17} $r={17} />
            <Tool $w={28} $gap={24} $off aria-label="text widget">
              <svg width="28" height="26" viewBox="0 0 28 26">
                <path d="M1 1h26v24H1z" fill="#e6e6e8" stroke="#b9b9bb" strokeWidth="2" />
                <path d="M2 5h24M15 1v4M15 21v4" stroke="#b9b9bb" strokeWidth="2" />
                <text x="10" y="19" fontFamily="Noto Sans" fontSize="17" fill="#fff">a</text>
              </svg>
            </Tool>
            <Tool $w={28} $off aria-label="table">
              <svg width="28" height="26" viewBox="0 0 28 26" fill="none" stroke="#b9b9bb" strokeWidth="2">
                <path d="M1 1h26v24H1zM1 7h26M1 13h26M1 19h26M9 1v24M18 1v24" />
              </svg>
            </Tool>
            <Sep $l={17} $r={17} />
            <Tool $w={28} $gap={26} $off aria-label="input">
              <svg width="28" height="12" viewBox="0 0 28 12" fill="none" stroke="#b9b9bb" strokeWidth="2"><path d="M1 1h26v10H1zM9 1v10M12 6h12M4 6h2" /></svg>
            </Tool>
            <Tool $w={24} $gap={26} $off><SansGlyph>ab</SansGlyph></Tool>
            <Tool $w={28} $gap={22} $off aria-label="paragraph">
              <svg width="28" height="34" viewBox="0 0 28 34" fill="#b9b9bb"><path d="M0 1h28v5H0zM0 11h20v4H0zM0 20h28v4H0zM0 30h20v4H0z" /></svg>
            </Tool>
            <Tool $w={32} $gap={22} $off><FxGlyph>F<small>(x)</small></FxGlyph></Tool>
            <Tool $w={28} $gap={22} $off aria-label="chart">
              <svg width="28" height="28" viewBox="0 0 28 28" fill="#b9b9bb"><path d="M0 10h8v18H0zM10 0h8v28h-8zM20 4h8v24h-8z" /></svg>
            </Tool>
            <Tool $w={32} $gap={23} $off aria-label="image">
              <svg width="32" height="28" viewBox="0 0 32 28">
                <path d="M1 1h30v26H1z" fill={panelBg} stroke="#b9b9bb" strokeWidth="2" />
                <circle cx="7" cy="7" r="3" fill="#dedee0" />
                <path d="M2 22l8-8 5 5 7-8 8 11z" fill="#dedee0" /><path d="M1 22h30v6H1z" fill="#b9b9bb" />
              </svg>
            </Tool>
            <Tool $w={26} $gap={27} $off aria-label="slanted line">
              <svg width="26" height="28" viewBox="0 0 26 28" fill="none" stroke="#b9b9bb" strokeWidth="2"><path d="M26 15L1 1l15 26" /></svg>
            </Tool>
            <Tool $w={24} $gap={24} $off aria-label="report">
              <svg width="24" height="28" viewBox="0 0 24 28">
                <path d="M1 1h22v26H1z" fill="none" stroke="#b9b9bb" strokeWidth="2" />
                <path d="M4 5h16M4 9h16M4 23h16" stroke="#b9b9bb" strokeWidth="2" />
                <path d="M4 12h16v8H4z" fill="#e4e4e6" /><path d="M4 20l5-4 4 2 4-3 3 5z" fill="#c8c8ca" />
              </svg>
            </Tool>
            <Tool $w={32} $gap={2} aria-label="floating frame">
              <svg width="32" height="32" viewBox="0 0 32 32">
                <path d="M3 3h26v26H3z" fill="#ededed" /><path d="M0 3h32M0 29h32M3 0v32M29 0v32" stroke="#333" strokeWidth="2" />
              </svg>
            </Tool>
            <Tool $w={10} aria-label="frame options"><Caret w={10} h={6} /></Tool>
            <Sep $l={15} $r={0} />
          </Bar>
          <Ruler>
            <RulerLabels>{[200, 300, 400, 500, 600, 700].map((n) => <span key={n}>{n}</span>)}</RulerLabels>
          </Ruler>
          <ParamPane>
            <TreeBox>
              <svg width="60" height="100" viewBox="0 0 60 100">
                <defs>
                  <linearGradient id="leafFill" x1="0" y1="0" x2="1" y2="1">
                    <stop offset="0" stopColor="#aaaaaa" /><stop offset="0.4" stopColor="#b4b4ae" /><stop offset="1" stopColor="#9c9c88" />
                  </linearGradient>
                </defs>
                <path d="M0 10h6l2 2h15v6M0 24l8-2 2-5h17l-3 15H0" fill="none" stroke="#222" strokeWidth="2" />
                <path d="M10 36v54M10 54h18M10 88h18" stroke="#a2a2a2" strokeWidth="2" fill="none" />
                <Leaf y={40} />
                <Leaf y={74} />
              </svg>
              <TreeLabels>
                <TreeLabel>Tree</TreeLabel>
                <TreeLabel $deep>Leaf1</TreeLabel>
                <TreeLabel $deep>Leaf2</TreeLabel>
              </TreeLabels>
            </TreeBox>
            <PaneIcons>
              <svg width="64" height="66" viewBox="0 0 64 66">
                <path d="M3 36Q14 17 32 17T61 36Q50 53 32 53T3 36z" fill="none" stroke="#333" strokeWidth="5" />
                <circle cx="32" cy="33" r="15" fill="#333" />
                <path d="M8 67L66 9" stroke="#b2b2b2" strokeWidth="6" /><path d="M1 64L60 5" stroke="#333" strokeWidth="5" />
              </svg>
              <svg width="62" height="66" viewBox="0 -4 62 66" fill="#333">
                <path d="M42 7l5-5q6-3 11 2t1 11l-5 6z" />
                <path d="M38 11l15 13-34 32L0 60l4-18zM38 19L9 45l5 5 29-26z" fillRule="evenodd" />
              </svg>
            </PaneIcons>
          </ParamPane>
          <Gap />
          <SheetWrap>
            <SheetColumn>
              <ColHeads>
                <ColHead $w={629} $pad={289}>B</ColHead>
                <ColHead $w={144}>C</ColHead>
                <ColHead $w={144}>D</ColHead>
                <ColHead $w={144} $on>E</ColHead>
                <ColHead $on />
              </ColHeads>
              <Sheet>
                <FloatBox>
                  <MapFrame>
                    <ChinaMap />
                    <CityLabel>北京</CityLabel>
                    <Legend>
                      <LegendTrack><i /><b /><i /></LegendTrack>
                      <LegendLabels><span>200</span><span>100</span></LegendLabels>
                    </Legend>
                    <MoreButton aria-label="more"><i /><i /><i /></MoreButton>
                    <MapCredit>
                      <svg width="14" height="14" viewBox="0 0 14 14">
                        <rect width="14" height="14" fill="#e8f0f2" /><path d="M0 0h7L0 7z" fill="#b5e59a" /><path d="M14 14H7l7-7z" fill="#7fd6fa" />
                        <path d="M12 1L1 8l4 1 2 4z" fill="#1673f0" />
                      </svg>
                      <span>高德地图 © 2020 AutoNavi</span>
                    </MapCredit>
                  </MapFrame>
                </FloatBox>
                {marks.map(([x, y]) => (
                  <Watermark key={x} $x={x} $y={y}>{'="zsh331 " + today()'}</Watermark>
                ))}
                <HandleLayer>
                  {handles.map(([x, y]) => <Handle key={`${x}-${y}`} $x={x} $y={y} />)}
                </HandleLayer>
              </Sheet>
            </SheetColumn>
            <VScroll>
              <VScrollUp aria-label="scroll up"><Chevron up /></VScrollUp>
              <VScrollThumb />
            </VScroll>
          </SheetWrap>
        </Main>

        <Rail>
          <RailToggle aria-label="collapse">
            <svg width="10" height="20" viewBox="0 0 10 20"><path d="M0 0l10 10L0 20z" fill="#9b9b9b" /></svg>
          </RailToggle>
          <RailButton aria-label="cell element">
            <svg width="32" height="32" viewBox="0 0 32 32" fill="none" stroke="currentColor" strokeWidth="4" strokeLinecap="round">
              <path d="M2 30V2h28M2 22h28M22 2v28M22 12h8M12 22v8" />
            </svg>
          </RailButton>
          <RailButton aria-label="cell attributes">
            <svg width="32" height="32" viewBox="0 0 32 32" fill="none" stroke="currentColor">
              <path d="M8 30H2V2h28v6" strokeWidth="4" strokeLinecap="round" strokeLinejoin="round" />
              <path d="M4 11h11M11 4v11M21 4v6M4 21h6" strokeWidth="2" />
              <circle cx="22" cy="22" r="10" fill="currentColor" stroke="none" />
              <circle cx="22" cy="16" r="2" fill="#e8e8e8" stroke="none" /><rect x="20" y="19" width="4" height="10" rx="1" fill="#e8e8e8" stroke="none" />
            </svg>
          </RailButton>
          <RailButton $on aria-label="floating element">
            <svg width="32" height="32" viewBox="0 0 32 32" fill={blue}>
              <path d="M4 4h24v24H4z" fill="none" stroke={blue} strokeWidth="4" />
              <circle cx="4" cy="4" r="4" /><circle cx="28" cy="4" r="4" /><circle cx="4" cy="28" r="4" /><circle cx="28" cy="28" r="4" />
              <path d="M6 6h20v20H6z" fill={panelBg} />
              <rect x="8" y="8" width="16" height="16" />
            </svg>
          </RailButton>
          <RailButton aria-label="widget">
            <svg width="32" height="24" viewBox="0 0 32 24" fill="none" stroke="currentColor">
              <rect x="2" y="2" width="28" height="20" strokeWidth="4" strokeLinejoin="round" /><path d="M16 8h10l-5 8z" fill="currentColor" stroke="none" />
            </svg>
          </RailButton>
          <RailButton aria-label="conditions">
            <svg width="36" height="24" viewBox="0 0 36 24" fill="none" stroke="currentColor">
              <path d="M6 5H1v14h5" strokeWidth="2" /><rect x="10" y="2" width="24" height="6" rx="1" strokeWidth="4" /><rect x="10" y="16" width="18" height="6" rx="1" strokeWidth="4" />
            </svg>
          </RailButton>
          <RailButton aria-label="hyperlink">
            <svg width="30" height="30" viewBox="0 0 30 30" fill="none" stroke="#60626c" strokeWidth="4" strokeLinecap="round">
              <path d="M8 16L4 12Q0 7 4 4T13 4L17 8M13 22L17 26Q22 30 26 27T26 18L22 14M10 10L20 20" />
            </svg>
          </RailButton>
        </Rail>

        <Panel>
          <PanelHead>
            <h2>悬浮元素</h2>
            <svg width="22" height="22" viewBox="0 0 22 22"><path d="M21 1L6 16" stroke={blue} strokeWidth="3" /><path d="M0 8l12 12-2 2H0z" fill={blue} /></svg>
          </PanelHead>
          <AddRow>
            <label htmlFor="add">添加元素</label>
            <AddButton id="add" aria-label="添加元素">
              <svg width="28" height="28" viewBox="0 0 28 28"><path d="M0 14h28M14 0v28" stroke="#333" strokeWidth="4" /></svg>
              <Caret w={12} c="#8f8f8f" />
            </AddButton>
          </AddRow>
          <Tabs>
            <Tab>类型</Tab><Tab>数据</Tab><Tab $on>样式</Tab><Tab>特效</Tab>
          </Tabs>
          <SubTabs>
            <SubTab>标题</SubTab><SubTab>图例</SubTab><SubTab>标签</SubTab>
            <SubTab>系列</SubTab><SubTab>背景</SubTab>
            <SubTab $on>提示<RedRing $x={25} $y={-10} $w={122} $h={76} /></SubTab>
          </SubTabs>
          <PanelBody>
            <PanelScroll>
              <CheckRow><CheckBox type="checkbox" defaultChecked />使用数据点提示</CheckRow>
              <SectionHead>内容<Caret w={16} h={10} c="#adadad" /></SectionHead>
              <ContentFields>
                <Segments>
                  <Segment>通用</Segment><Segment>富文本</Segment>
                  <Segment $on>自定义<RedRing $x={-17} $y={-23} $w={183} $h={92} /></Segment>
                </Segments>
                <Code role="textbox" aria-label="内容" contentEditable suppressContentEditableWarning spellCheck={false}>
                  <CodeLine><Kw>function</Kw><Br>()</Br><Br $match>{"{"}</Br> <Kw>return</Kw> <Kw>this</Kw><b>.</b>name<Op>+</Op></CodeLine>
                  <CodeLine $on><Kw>this</Kw><b>.</b>seriesName<Op>+</Op><Kw>this</Kw><b>.</b>value<b>;</b><Br>{"}"}</Br></CodeLine>
                </Code>
                <WideButton>使用html解析文本内容</WideButton>
                <Field $top>
                  <span>样式</span>
                  <Segments><Segment $on>自动</Segment><Segment>自定义</Segment></Segments>
                </Field>
              </ContentFields>
              <SectionHead>边框<Caret w={16} h={10} c="#adadad" /></SectionHead>
              <Fields>
                <Field>
                  <label htmlFor="lineType">线型</label>
                  <SelectFrame><Select id="lineType" $pad={6}><option>无</option></Select><SelectArrow><Chevron /></SelectArrow></SelectFrame>
                </Field>
                <Field>
                  <label htmlFor="lineColor">颜色</label>
                  <ColorButton id="lineColor"><span /><SelectArrow $plain><Chevron /></SelectArrow></ColorButton>
                </Field>
                <Field>
                  <label htmlFor="radius">圆角</label>
                  <Stepper>
                    <StepInput id="radius" defaultValue="2px" />
                    <StepButtons><button aria-label="increase"><Chevron up /></button><button aria-label="decrease"><Chevron /></button></StepButtons>
                  </Stepper>
                </Field>
              </Fields>
              <SectionHead>背景<Caret w={16} h={10} c="#adadad" /></SectionHead>
              <Fields>
                <Field>
                  <label htmlFor="fill">填充</label>
                  <SelectFrame><Select id="fill" $pad={12}><option>颜色</option></Select><SelectArrow><Chevron /></SelectArrow></SelectFrame>
                </Field>
                <Palette>
                  <SwatchRow>
                    <PickButton aria-label="pick color">
                      <svg width="23" height="23" viewBox="0 0 23 23">
                        <path d="M1 22l2-6L13 6l4 4L7 20z" fill="#fff" stroke="#444" strokeWidth="1.5" strokeDasharray="2 1" />
                        <path d="M11 4l3 1 4-4q4-1 4 3l-4 5 1 3-2 1-8-7z" fill="#222" />
                      </svg>
                    </PickButton>
                    {swatches.map((c, i) => <Swatch key={c} $c={c} $on={i === 0} aria-label={c} />)}
                  </SwatchRow>
                  <SwatchRow>{swatches2.map((c, i) => <Swatch key={c} $c={c} $on={i === 0} aria-label={c} />)}</SwatchRow>
                </Palette>
              </Fields>
            </PanelScroll>
            <ScrollThumb />
          </PanelBody>
        </Panel>
      </Workspace>
    </Page>
  );
}
